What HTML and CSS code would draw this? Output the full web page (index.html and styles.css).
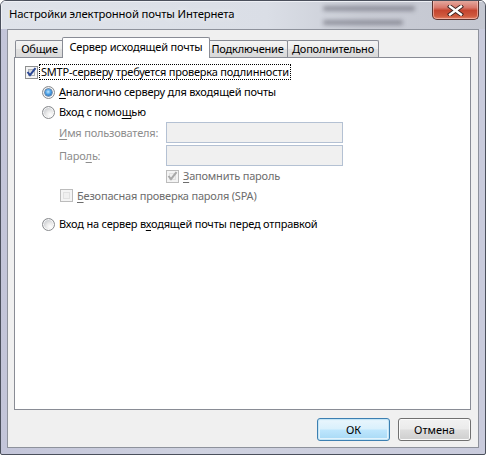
FILE: index.html
```html
<!DOCTYPE html>
<html lang="ru">
<head>
<meta charset="utf-8">
<title>Настройки электронной почты Интернета</title>
<link rel="stylesheet" href="styles.css">
</head>
<body>
<div class="window">
  <div class="titlebar">
    <span class="title">Настройки электронной почты Интернета</span>
    <div class="backdrop">
      <span class="smear s1"></span>
      <span class="smear s2"></span>
    </div>
    <button class="close" aria-label="Закрыть">
      <svg width="17" height="11" viewBox="0 0 17 11">
        <path d="M3 1.5 L14 9.5 M14 1.5 L3 9.5" stroke="#3b2320" stroke-width="4.2" stroke-linecap="square"/>
        <path d="M3 1.5 L14 9.5 M14 1.5 L3 9.5" stroke="#ffffff" stroke-width="2.4" stroke-linecap="square"/>
      </svg>
    </button>
  </div>

  <div class="client">
    <div class="tabs">
      <div class="tab tab-general">Общие</div>
      <div class="tab tab-outgoing active">Сервер исходящей почты</div>
      <div class="tab tab-connection">Подключение</div>
      <div class="tab tab-advanced">Дополнительно</div>
    </div>

    <div class="panel">
      <div class="row">
        <span class="check">
          <svg class="mark" width="11" height="11" viewBox="0 0 11 11"><path d="M1.5 5 L4 8.2 L9.5 1.2" fill="none" stroke="#2b4795" stroke-width="2"/></svg>
        </span>
        <span class="label focus">SMTP-серверу требуется проверка подлинности</span>
      </div>

      <div class="row indent1">
        <span class="radio on"></span>
        <span class="label"><u>А</u>налогично серверу для входящей почты</span>
      </div>

      <div class="row indent1">
        <span class="radio"></span>
        <span class="label">Вход с помо<u>щ</u>ью</span>
      </div>

      <div class="fields">
        <span class="field-label"><u>И</u>мя пользователя:</span>
        <span class="input"></span>
        <span class="field-label">Паро<u>л</u>ь:</span>
        <span class="input"></span>
      </div>

      <div class="row remember">
        <span class="check disabled">
          <svg class="mark" width="11" height="11" viewBox="0 0 11 11"><path d="M1.5 5 L4 8.2 L9.5 1.2" fill="none" stroke="#a9a9a9" stroke-width="2"/></svg>
        </span>
        <span class="label muted"><u>З</u>апомнить пароль</span>
      </div>

      <div class="row indent2 spa">
        <span class="check disabled"></span>
        <span class="label muted"><u>Б</u>езопасная проверка пароля (SPA)</span>
      </div>

      <div class="row indent1 before-send">
        <span class="radio"></span>
        <span class="label">Вход на сервер в<u>х</u>одящей почты перед отправкой</span>
      </div>
    </div>

    <div class="buttons">
      <button class="btn default">ОК</button>
      <button class="btn">Отмена</button>
    </div>
  </div>
</div>
</body>
</html>
```

FILE: styles.css
```css
html, body {
  margin: 0;
  padding: 0;
  background: #ffffff;
}

body {
  font-family: "Noto Sans", "Liberation Sans", sans-serif;
  font-size: 11px;
  letter-spacing: -0.2px;
  color: #000;
}

/* ---- window frame ---- */
.window {
  width: 486px;
  height: 455px;
  box-sizing: border-box;
  display: flex;
  flex-direction: column;
  border: 1px solid #4b505c;
  border-radius: 6px 6px 2px 2px;
  background: linear-gradient(90deg, #c3c5d9 0%, #cfd2e0 40%, #c9cbdc 100%);
  overflow: hidden;
}

.titlebar {
  position: relative;
  height: 28px;
  flex: none;
  display: flex;
  align-items: flex-start;
  background: linear-gradient(90deg, #dfe3ea 0%, #dadee6 55%, #c9ccd5 75%, #c4c7d1 100%);
  box-shadow: inset 1px 1px 0 #eef0f5;
}

.title {
  padding: 5px 0 0 8px;
  line-height: 16px;
  font-size: 11.3px;
  letter-spacing: -0.15px;
  color: #000;
  text-shadow: 0 0 6px rgba(255, 255, 255, 0.9);
  position: relative;
  z-index: 1;
}

/* blurred desktop seen through the glass */
.backdrop {
  position: absolute;
  left: 310px;
  top: 0;
  width: 120px;
  height: 28px;
}

.smear {
  position: absolute;
  display: block;
  background: rgba(70, 72, 84, 0.45);
  filter: blur(2px);
  border-radius: 2px;
}

.s1 { left: 12px; top: 5px; width: 92px; height: 5px; }
.s2 { left: 12px; top: 19px; width: 80px; height: 5px; }

.close {
  margin: -1px 6px 0 auto;
  width: 47px;
  height: 20px;
  padding: 0;
  border: 1px solid #5d3430;
  border-top: none;
  border-radius: 0 0 5px 5px;
  background: linear-gradient(180deg, #e6b0a6 0%, #d8786b 40%, #c5452f 55%, #cf5a3e 85%, #e3846a 100%);
  box-shadow: inset 0 0 0 1px rgba(255, 210, 200, 0.55);
  display: flex;
  align-items: center;
  justify-content: center;
  position: relative;
  z-index: 2;
}

.close svg { display: block; margin-top: 1px; }

/* ---- client area ---- */
.client {
  flex: 1;
  margin: 0 6px 6px 6px;
  border: 1px solid #8e929c;
  background: #f0f0f0;
  display: flex;
  flex-direction: column;
  padding: 7px 7px 6px 6px;
  min-height: 0;
}

.tabs {
  display: flex;
  align-items: flex-end;
  height: 20px;
  padding-left: 1px;
}

.tab {
  height: 17px;
  box-sizing: border-box;
  border: 1px solid #898c95;
  border-bottom: none;
  border-radius: 2px 2px 0 0;
  background: linear-gradient(180deg, #f4f4f4 0%, #ececec 50%, #e1e1e1 51%, #d9d9d9 100%);
  padding: 0;
  text-align: center;
  line-height: 16px;
  margin-left: -1px;
  white-space: nowrap;
}

.tab:first-child { margin-left: 0; }

.tab-general { width: 49px; }
.tab-outgoing { width: 144px; }
.tab-connection { width: 81px; }
.tab-advanced { width: 92px; }

.tab.active {
  position: relative;
  z-index: 1;
  height: 21px;
  width: 148px;
  margin: 0 -2px -1px -2px;
  background: #ffffff;
  line-height: 18px;
}

.panel {
  flex: 1;
  background: #ffffff;
  border: 1px solid #898c95;
  padding: 4px 10px 0 10px;
}

.row {
  display: flex;
  align-items: center;
  height: 20px;
}

.indent1 { margin-left: 17px; }
.indent2 { margin-left: 35px; }

.label {
  margin-left: 4px;
  white-space: nowrap;
  line-height: 14px;
}

.focus {
  outline: 1px dotted #000;
  outline-offset: 0;
  padding: 0 1px;
  margin-left: 2px;
}

.muted { color: #6d6d6d; }

u { text-decoration: underline; text-underline-offset: 2px; }

/* ---- checkbox ---- */
.check {
  position: relative;
  flex: none;
  width: 13px;
  height: 13px;
  box-sizing: border-box;
  border: 1px solid #8e8f8f;
  background: #f4f4f4;
  padding: 2px;
}

.check::before {
  content: "";
  display: block;
  width: 100%;
  height: 100%;
  box-sizing: border-box;
  border: 1px solid #aeb3b9;
  background: linear-gradient(135deg, #cbcfd5 0%, #e6e8eb 60%, #f7f7f7 100%);
}

.check.disabled { border-color: #bcbcbc; background: #f4f4f4; }
.check.disabled::before { border-color: #e1e1e1; background: #f0f0f0; }

.mark {
  position: absolute;
  left: 0;
  top: 0;
}

/* ---- radio ---- */
.radio {
  flex: none;
  width: 13px;
  height: 13px;
  box-sizing: border-box;
  border-radius: 50%;
  border: 1px solid #8a8c8f;
  background: radial-gradient(circle at 65% 70%, #ffffff 0%, #eaeaea 35%, #c3c6cb 80%, #a9adb3 100%);
  box-shadow: inset 0 0 0 1px rgba(255, 255, 255, 0.8);
  display: flex;
  align-items: center;
  justify-content: center;
}

.radio.on::after {
  content: "";
  width: 7px;
  height: 7px;
  border-radius: 50%;
  background: radial-gradient(circle at 45% 40%, #bfe6ff 0%, #4aa0e6 45%, #1b4f92 100%);
  box-shadow: 0 0 0 0.5px #1e4a80;
}

/* ---- login fields ---- */
.fields {
  display: grid;
  grid-template-columns: 107px 177px;
  grid-auto-rows: 21px;
  row-gap: 2px;
  margin-left: 34px;
  align-items: center;
}

.field-label { color: #8d8d8d; white-space: nowrap; }

.input {
  height: 21px;
  box-sizing: border-box;
  border: 1px solid #b4c1d3;
  background: #f0f0f0;
}

.remember { margin-left: 141px; }

.spa { height: 19px; }

.before-send { margin-top: 9px; }

/* ---- dialog buttons ---- */
.buttons {
  display: flex;
  justify-content: flex-end;
  gap: 8px;
  margin-top: 8px;
}

.btn {
  width: 73px;
  height: 23px;
  box-sizing: border-box;
  border: 1px solid #707070;
  border-radius: 3px;
  font: inherit;
  color: #000;
  padding: 0;
  background: linear-gradient(180deg, #f2f2f2 0%, #ebebeb 48%, #dddddd 52%, #cfcfcf 100%);
  box-shadow: inset 0 0 0 1px #fbfbfb;
}

.btn.default {
  border-color: #3c7fb1;
  background: linear-gradient(180deg, #eaf6fd 0%, #d9f0fc 48%, #bee6fd 52%, #a7d9f5 100%);
  box-shadow: inset 0 0 0 1px #c4e5f6, inset 0 0 0 2px #e2f3fc;
}
```
